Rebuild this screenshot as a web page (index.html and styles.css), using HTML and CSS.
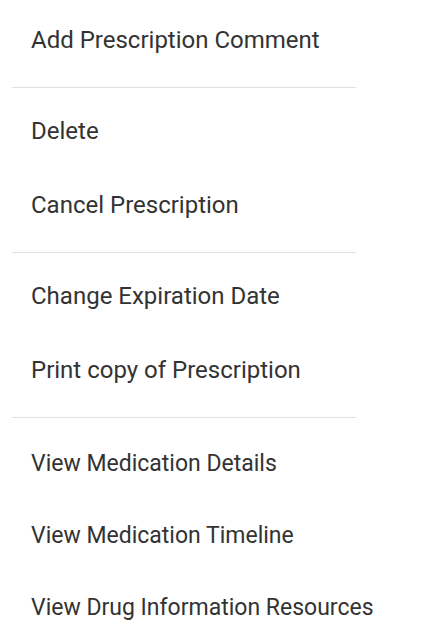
FILE: index.html
```html
<!DOCTYPE html>
<html lang="en">
<head>
<meta charset="utf-8">
<title>Prescription menu</title>
<link rel="stylesheet" href="styles.css">
</head>
<body>
<ul class="menu">
  <li class="menu-item">Add Prescription Comment</li>
  <li class="menu-divider" role="separator"></li>
  <li class="menu-item">Delete</li>
  <li class="menu-item">Cancel Prescription</li>
  <li class="menu-divider" role="separator"></li>
  <li class="menu-item">Change Expiration Date</li>
  <li class="menu-item">Print copy of Prescription</li>
  <li class="menu-divider" role="separator"></li>
  <li class="menu-item menu-item--compact">View Medication Details</li>
  <li class="menu-item menu-item--compact">View Medication Timeline</li>
  <li class="menu-item menu-item--compact">View Drug Information Resources</li>
</ul>
</body>
</html>
```

FILE: styles.css
```css
html, body {
  margin: 0;
  padding: 0;
  background: #ffffff;
}

body {
  font-family: Roboto, "Liberation Sans", Arial, sans-serif;
  color: #333333;
}

.menu {
  list-style: none;
  margin: 0;
  padding: 5px 0 0 12px;
  width: 400px;
}

.menu-item {
  box-sizing: border-box;
  height: 74px;
  padding: 0 0 0 19px;
  font-size: 24px;
  line-height: 71px;
  white-space: nowrap;
}

.menu-item--compact {
  height: 72px;
  font-size: 23px;
  line-height: 76px;
}

.menu-divider {
  width: 344px;
  height: 1px;
  margin: 8px 0;
  background: #e0e0e0;
}
```
